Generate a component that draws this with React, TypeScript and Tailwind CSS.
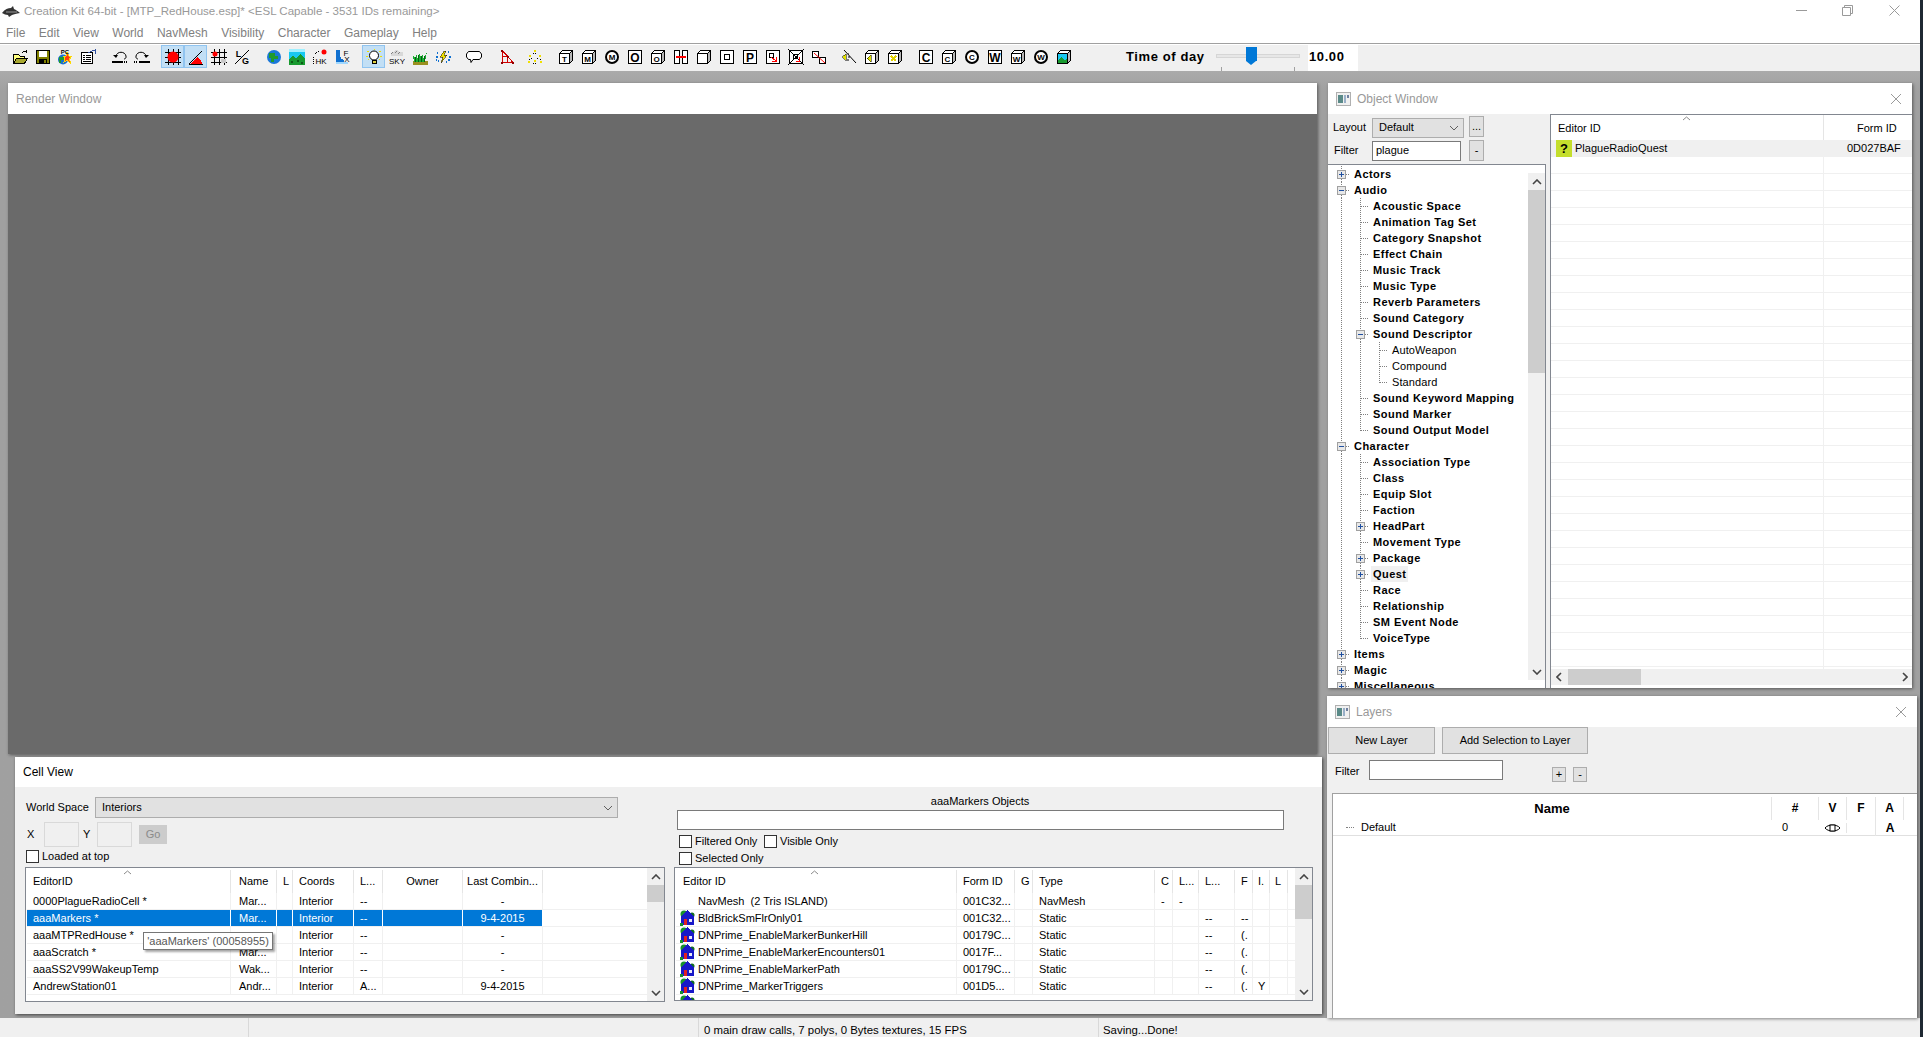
import { type ReactNode } from 'react';

const Svg = ({ children }: { children: ReactNode }) => (
  <svg width="16" height="16" viewBox="0 0 16 16" shapeRendering="crispEdges" fill="none">
    {children}
  </svg>
);

const Tx = ({ x, y, s = 8, c = '#000', w = 700, children }: { x: number; y: number; s?: number; c?: string; w?: number; children: string }) => (
  <text x={x} y={y} fontSize={s} fill={c} fontWeight={w} textAnchor="middle" shapeRendering="auto">
    {children}
  </text>
);

// cube with a letter on the front face
const Cube = ({ letter, fill = '#fff', children }: { letter?: string; fill?: string; children?: ReactNode }) => (
  <Svg>
    <path d="M1.5 4.5 L4.5 1.5 H14.5 V11.5 L11.5 14.5 Z" fill="#b8b8b8" stroke="#000" />
    <path d="M1.5 4.5 L4.5 1.5 H14.5 L11.5 4.5 Z" fill="#fff" stroke="#000" />
    <rect x="1.5" y="4.5" width="10" height="10" fill={fill} stroke="#000" />
    {letter && <Tx x={6.5} y={12.5} s={8}>{letter}</Tx>}
    {children}
  </Svg>
);

const Boxed = ({ letter, children }: { letter?: string; children?: ReactNode }) => (
  <Svg>
    <rect x="1.5" y="1.5" width="13" height="13" fill="#fff" stroke="#000" />
    {letter && <Tx x={8} y={12.5} s={12}>{letter}</Tx>}
    {children}
  </Svg>
);

const Ring = ({ letter }: { letter: string }) => (
  <Svg>
    <circle cx="8" cy="8" r="6" fill="#fff" stroke="#000" strokeWidth="2" shapeRendering="auto" />
    <Tx x={8} y={11} s={8}>{letter}</Tx>
  </Svg>
);

const Grid = () => (
  <path d="M3.5 0V16M8.5 0V16M13.5 0V16M0 3.5H16M0 8.5H16M0 13.5H16" stroke="#000" />
);

const toolbarIcons: Record<string, ReactNode> = {
  open: (
    <Svg>
      <path d="M1.5 5.5H6.5L8 7H12.5V14.5H1.5Z" fill="#ffff80" stroke="#000" />
      <path d="M1.5 14.5L4.5 9.5H15.5L12.5 14.5Z" fill="#a8a830" stroke="#000" />
      <path d="M9.5 4.5L11.5 2.5H14M14 1V4" stroke="#000" />
    </Svg>
  ),
  save: (
    <Svg>
      <rect x="1.5" y="1.5" width="13" height="13" fill="#808000" stroke="#000" />
      <rect x="4" y="2" width="8" height="6" fill="#fff" />
      <rect x="4" y="10" width="8" height="5" fill="#000" />
      <rect x="9" y="11" width="2" height="3" fill="#808000" />
    </Svg>
  ),
  pc: (
    <Svg>
      <circle cx="6" cy="10.5" r="5" fill="#1a6fd0" shapeRendering="auto" />
      <path d="M2 8H7V11H4V14H2Z" fill="#1f9a30" />
      <path d="M10 3L12 7H15L12.5 10L13.5 14L10 11.5L7 13L8 9L6 7H9Z" fill="#ff3a10" stroke="#ffd800" />
      <Tx x={8} y={5} s={6}>PC</Tx>
    </Svg>
  ),
  form: (
    <Svg>
      <rect x="1.5" y="3.5" width="11" height="11" fill="#fff" stroke="#000" />
      <path d="M3 6.5H5M6 6.5H11M3 8.5H5M6 8.5H11M3 10.5H5M6 10.5H11M3 12.5H11" stroke="#000" />
      <path d="M8 4L13 1.5L15 1V5" stroke="#3050a0" />
    </Svg>
  ),
  undo: (
    <svg width="18" height="16" viewBox="0 0 18 16" fill="none">
      <path d="M5 7C6 2 14 2 15 7C15.5 9 14 10 13 10" stroke="#000" />
      <path d="M2 6H7L5 9Z" fill="#000" />
      <path d="M1 13H12" stroke="#000" strokeWidth="2" />
      <path d="M13 13H17" stroke="#000" strokeDasharray="1 1" strokeWidth="2" />
    </svg>
  ),
  redo: (
    <svg width="18" height="16" viewBox="0 0 18 16" fill="none">
      <path d="M13 7C12 2 4 2 3 7C2.5 9 4 10 5 10" stroke="#000" />
      <path d="M16 6H11L13 9Z" fill="#000" />
      <path d="M6 13H17" stroke="#000" strokeWidth="2" />
      <path d="M1 13H5" stroke="#000" strokeDasharray="1 1" strokeWidth="2" />
    </svg>
  ),
  redGrid: (
    <Svg>
      <Grid />
      <circle cx="8" cy="8" r="5.5" fill="#f00" shapeRendering="auto" />
    </Svg>
  ),
  angle: (
    <Svg>
      <path d="M1 15L14 2" stroke="#000" shapeRendering="auto" />
      <path d="M2 15L9 8C12 10 14 12 14 15Z" fill="#f00" />
      <path d="M1 15.5H15" stroke="#000" />
    </Svg>
  ),
  gridDot: (
    <Svg>
      <Grid />
      <circle cx="4" cy="5" r="2.5" fill="#f00" shapeRendering="auto" />
      <rect x="10" y="10" width="5" height="4" fill="#c8c8c8" />
    </Svg>
  ),
  lg: (
    <Svg>
      <path d="M1 15L15 1" stroke="#000" shapeRendering="auto" />
      <Tx x={4.5} y={7.5} s={9}>L</Tx>
      <Tx x={11.5} y={15} s={9}>G</Tx>
    </Svg>
  ),
  globe: (
    <Svg>
      <circle cx="8" cy="8" r="7" fill="#1a78d8" shapeRendering="auto" />
      <path d="M3 4H9V7H12V10H8V13H5V9H3Z" fill="#1f9a30" />
    </Svg>
  ),
  land: (
    <Svg>
      <rect x="0" y="0" width="16" height="16" fill="#18c8f0" />
      <rect x="0" y="0" width="16" height="3" fill="#a0f0ff" />
      <path d="M0 16V10L4 7L7 10L11 5L16 10V16Z" fill="#189a30" />
      <path d="M2 12H4V14H2ZM8 11H10V13H8ZM12 13H14V15H12Z" fill="#0c5c18" />
    </Svg>
  ),
  hk: (
    <Svg>
      <path d="M1.5 15V7M3 5L5 3L8 2" stroke="#000" strokeDasharray="1 1" />
      <circle cx="12" cy="3" r="2.5" fill="#f00" shapeRendering="auto" />
      <Tx x={9} y={15} s={8} w={400}>HK</Tx>
    </Svg>
  ),
  fx: (
    <Svg>
      <path d="M1 1H5V7C5 9 7 10 9 11V15H1Z" fill="#1070d0" />
      <path d="M1 13H13V15H1Z" fill="#a0d8ff" />
      <Tx x={11} y={7} s={8} w={400}>F</Tx>
      <Tx x={12} y={13} s={8} w={400}>X</Tx>
    </Svg>
  ),
  bulb: (
    <Svg>
      <circle cx="8" cy="6.5" r="4.5" fill="#fff" stroke="#000" shapeRendering="auto" />
      <path d="M6 11H10V14H6Z" fill="#e0d040" stroke="#000" />
      <path d="M1 2L3 3M15 2L13 3M0 7H2M14 7H16M2 11L3 10M14 11L13 10M8 0V1" stroke="#f0e000" />
    </Svg>
  ),
  sky: (
    <Svg>
      <path d="M2 7C0 4 4 3 5 3C6 0 10 1 11 3C14 2 15 5 14 7Z" fill="#d8d8d8" />
      <path d="M4 3L2 5M8 2L5 5M11 3L8 6" stroke="#808080" strokeDasharray="1 1" />
      <Tx x={8} y={15} s={8} w={400}>SKY</Tx>
    </Svg>
  ),
  grass: (
    <Svg>
      <rect x="1" y="12" width="15" height="4" fill="#9a9020" />
      <path d="M2 13L1 6L4 10L4 4L6 10L8 3L9 10L11 5L11 10L15 3L13 13Z" fill="#18b030" />
      <path d="M3 13V8M6 13V6M9 13V7M12 13V7" stroke="#0c5c18" />
    </Svg>
  ),
  rain: (
    <Svg>
      <path d="M9 2L5 8H8L6 14L12 6H9L11 2Z" fill="#f0e000" stroke="#000" strokeWidth="0.5" />
      <path d="M2 4H3M1 8H3M3 12H4M13 3H14M14 8H16M13 11H15M11 13H12M1 11H2" stroke="#1070d0" strokeWidth="2" />
    </Svg>
  ),
  speech: (
    <svg width="18" height="16" viewBox="0 0 18 16" fill="none">
      <path d="M3.5 2.5H14.5L16.5 5V8L14.5 10.5H8L6 13.5L5.5 10.5H3.5L1.5 8V5Z" fill="#fff" stroke="#000" />
    </svg>
  ),
  redTri: (
    <Svg>
      <path d="M3.5 2V13.5H14L8.5 7L3.5 2M3.5 7.5H8.5M8.5 7V13.5" stroke="#d00000" />
      <path d="M2 1H4V3H2ZM2 13H4V15H2ZM13 13H15V15H13ZM8 7H10V9H8Z" fill="#900000" />
    </Svg>
  ),
  stars: (
    <Svg>
      <path d="M7 1H9V3H7ZM2 6H4V8H2ZM12 6H14V8H12ZM1 12H3V14H1ZM13 12H15V14H13ZM7 11H9V13H7Z" fill="#f0e000" />
      <path d="M6 4H10M4 9H6M10 9H12M2 10H3M13 10H14M6 14H10" stroke="#000" strokeDasharray="1 1" />
    </Svg>
  ),
  cubeT: <Cube letter="T" />,
  cubeM: <Cube letter="M" />,
  ringM: <Ring letter="M" />,
  boxO: <Boxed letter="O" />,
  cubeO: <Cube letter="O" />,
  door: (
    <Svg>
      <rect x="1.5" y="1.5" width="5" height="13" stroke="#000" fill="#fff" />
      <rect x="9.5" y="1.5" width="5" height="13" stroke="#000" fill="#fff" />
      <path d="M3 7H13V9H3Z" fill="#f00" />
    </Svg>
  ),
  cube: <Cube />,
  boxIn: (
    <Boxed>
      <rect x="5.5" y="5.5" width="5" height="5" stroke="#000" />
    </Boxed>
  ),
  boxP: <Boxed letter="P" />,
  boxRed: (
    <Boxed>
      <rect x="4.5" y="4.5" width="4" height="4" stroke="#000" />
      <path d="M6 8L11 12M11 8V12H7" stroke="#f00" />
    </Boxed>
  ),
  boxX: (
    <Boxed>
      <path d="M0 0L16 16M16 0L0 16" stroke="#000" shapeRendering="auto" />
      <rect x="5.5" y="5.5" width="4" height="4" stroke="#000" />
      <path d="M11 8V12H8" stroke="#f00" />
    </Boxed>
  ),
  link: (
    <Svg>
      <rect x="1.5" y="2.5" width="6" height="6" fill="#fff" stroke="#000" />
      <rect x="8.5" y="8.5" width="6" height="6" fill="#fff" stroke="#000" />
      <path d="M3 4L14 14" stroke="#f00" shapeRendering="auto" />
    </Svg>
  ),
  cone: (
    <Svg>
      <path d="M1 8L5 5V12Z" fill="#e0e000" stroke="#000" strokeWidth="0.5" />
      <path d="M3 1L15 14M7 8H9M6 11H8M7 5H8" stroke="#000" shapeRendering="auto" />
    </Svg>
  ),
  cubeSpeak: (
    <Cube>
      <path d="M3 9.5L7 6V13Z" fill="#e0e000" stroke="#000" strokeWidth="0.5" />
    </Cube>
  ),
  cubeX: (
    <Cube>
      <path d="M4 7L9 12M9 7L4 12" stroke="#e0d000" strokeWidth="1.5" />
    </Cube>
  ),
  boxC: <Boxed letter="C" />,
  cubeC: <Cube letter="C" />,
  ringC: <Ring letter="C" />,
  boxW: <Boxed letter="W" />,
  cubeW: <Cube letter="W" />,
  ringW: <Ring letter="W" />,
  cubeLand: (
    <Cube>
      <rect x="2" y="5" width="9" height="9" fill="#18c8f0" />
      <path d="M2 14V11L5 8L8 11L11 10V14Z" fill="#189a30" />
    </Cube>
  ),
};

const ToolGroup = ({ icons, pitch, className = '' }: { icons: string[]; pitch: string; className?: string }) => (
  <div className={`mb-[3px] flex items-center ${className}`}>
    {icons.map((name) => {
      const active = name === 'redGrid' || name === 'angle' || name === 'bulb';
      return (
        <div
          key={name}
          className={`flex h-[23px] items-center justify-center border ${pitch} ${
            active ? 'border-[#90c4f0] bg-[#c2dff5]' : 'border-transparent'
          }`}
        >
          {toolbarIcons[name]}
        </div>
      );
    })}
  </div>
);

const Toolbar = () => (
  <div className="flex h-[26px] items-center bg-[#f0f0f0] pl-[9px]">
    <ToolGroup icons={['open', 'save', 'pc', 'form']} pitch="w-[22.5px]" />
    <ToolGroup icons={['undo', 'redo']} pitch="w-[22px]" className="ml-[10px]" />
    <ToolGroup icons={['redGrid', 'angle', 'gridDot', 'lg']} pitch="w-[23px]" className="ml-[8px]" />
    <ToolGroup icons={['globe', 'land', 'hk', 'fx']} pitch="w-[23px]" className="ml-[9px]" />
    <ToolGroup icons={['bulb', 'sky', 'grass', 'rain']} pitch="w-[23px]" className="ml-[8px]" />
    <ToolGroup icons={['speech']} pitch="w-[23px]" className="ml-[8px]" />
    <ToolGroup icons={['redTri']} pitch="w-[23px]" className="ml-[10px]" />
    <ToolGroup icons={['stars']} pitch="w-[23px]" className="ml-[5px]" />
    <ToolGroup
      icons={['cubeT', 'cubeM', 'ringM', 'boxO', 'cubeO', 'door', 'cube', 'boxIn', 'boxP', 'boxRed', 'boxX', 'link']}
      pitch="w-[23px]"
      className="ml-[8px]"
    />
    <ToolGroup icons={['cone', 'cubeSpeak', 'cubeX']} pitch="w-[23px]" className="ml-[7px]" />
    <ToolGroup
      icons={['boxC', 'cubeC', 'ringC', 'boxW', 'cubeW', 'ringW', 'cubeLand']}
      pitch="w-[23px]"
      className="ml-[8px]"
    />
    <span className="mb-[3px] ml-[51px] w-[90px] text-[13px] font-bold tracking-[0.6px] text-black">Time of day</span>
    <div className="relative h-[26px] w-[84px]">
      <div className="absolute top-[9px] left-0 h-[4px] w-[84px] border border-[#d6d6d6] bg-[#e7e7e7]" />
      <div className="absolute top-[2px] left-[30px] h-[14px] w-[11px] bg-[#0078d7]" />
      <div className="absolute top-[16px] left-[30px] h-0 w-0 border-x-[5.5px] border-t-[4px] border-x-transparent border-t-[#0078d7]" />
      <div className="absolute top-[22px] left-[5px] h-[4px] w-px bg-[#a0a0a0]" />
      <div className="absolute top-[22px] left-[78px] h-[4px] w-px bg-[#a0a0a0]" />
    </div>
    <div className="ml-[8px] flex h-[26px] w-[50px] items-center bg-white pb-[2px] pl-[1px] text-[13px] font-bold tracking-[0.6px] text-black">
      10.00
    </div>
  </div>
);

const WindowIcon = () => (
  <svg width="15" height="14" viewBox="0 0 15 14" shapeRendering="crispEdges" className="mr-[6px]">
    <rect x="0.5" y="0.5" width="14" height="13" fill="#f0f0f0" stroke="#b0b0b0" />
    <rect x="2" y="3" width="5" height="8" fill="#5a8a88" />
    <rect x="8" y="3" width="2" height="8" fill="#9ab0c8" />
    <rect x="11" y="3" width="2" height="3" fill="#7080a0" />
  </svg>
);

const CloseX = () => (
  <svg width="12" height="12" viewBox="0 0 12 12">
    <path d="M1 1L11 11M11 1L1 11" stroke="#9a9a9a" />
  </svg>
);

const Chevron = ({ up = false, dark = false }: { up?: boolean; dark?: boolean }) => (
  <svg width="10" height="6" viewBox="0 0 10 6">
    <path
      d={up ? 'M1 5L5 1L9 5' : 'M1 1L5 5L9 1'}
      fill="none"
      stroke={dark ? '#444' : '#606060'}
      strokeWidth={dark ? 1.6 : 1}
    />
  </svg>
);

const SortMark = ({ className }: { className: string }) => (
  <div className={`absolute top-[1px] ${className}`}>
    <svg width="9" height="5" viewBox="0 0 9 5">
      <path d="M1 4L4.5 1L8 4" fill="none" stroke="#8a8a8a" />
    </svg>
  </div>
);

const ArrowSide = ({ right = false }: { right?: boolean }) => (
  <svg width="6" height="10" viewBox="0 0 6 10">
    <path d={right ? 'M1 1L5 5L1 9' : 'M5 1L1 5L5 9'} fill="none" stroke="#444" strokeWidth="1.6" />
  </svg>
);

const VScroll = ({ thumb, spacer }: { thumb: string; spacer: string }) => (
  <div className="flex h-full w-[17px] shrink-0 flex-col bg-[#f0f0f0]">
    <div className="flex h-[17px] items-center justify-center">
      <Chevron up dark />
    </div>
    <div className={`bg-[#cdcdcd] ${thumb}`} />
    <div className={spacer} />
    <div className="flex h-[17px] items-center justify-center">
      <Chevron dark />
    </div>
  </div>
);

const Check = ({ label, className = '' }: { label: string; className?: string }) => (
  <div className={`flex items-center ${className}`}>
    <span className="h-[13px] w-[13px] border border-[#333] bg-white" />
    <span className="ml-[3px]">{label}</span>
  </div>
);

// --- Tree in the Object Window

type TreeRow = { g: string; label: string; bold?: boolean; hover?: boolean };

const treeRows: TreeRow[] = [
  { g: '+', label: 'Actors', bold: true },
  { g: '-', label: 'Audio', bold: true },
  { g: '|T', label: 'Acoustic Space', bold: true },
  { g: '|T', label: 'Animation Tag Set', bold: true },
  { g: '|T', label: 'Category Snapshot', bold: true },
  { g: '|T', label: 'Effect Chain', bold: true },
  { g: '|T', label: 'Music Track', bold: true },
  { g: '|T', label: 'Music Type', bold: true },
  { g: '|T', label: 'Reverb Parameters', bold: true },
  { g: '|T', label: 'Sound Category', bold: true },
  { g: '|-', label: 'Sound Descriptor', bold: true },
  { g: '||T', label: 'AutoWeapon' },
  { g: '||T', label: 'Compound' },
  { g: '||L', label: 'Standard' },
  { g: '|T', label: 'Sound Keyword Mapping', bold: true },
  { g: '|T', label: 'Sound Marker', bold: true },
  { g: '|L', label: 'Sound Output Model', bold: true },
  { g: '-', label: 'Character', bold: true },
  { g: '|T', label: 'Association Type', bold: true },
  { g: '|T', label: 'Class', bold: true },
  { g: '|T', label: 'Equip Slot', bold: true },
  { g: '|T', label: 'Faction', bold: true },
  { g: '|+', label: 'HeadPart', bold: true },
  { g: '|T', label: 'Movement Type', bold: true },
  { g: '|+', label: 'Package', bold: true },
  { g: '|+', label: 'Quest', bold: true, hover: true },
  { g: '|T', label: 'Race', bold: true },
  { g: '|T', label: 'Relationship', bold: true },
  { g: '|T', label: 'SM Event Node', bold: true },
  { g: '|L', label: 'VoiceType', bold: true },
  { g: '+', label: 'Items', bold: true },
  { g: '+', label: 'Magic', bold: true },
  { g: '+', label: 'Miscellaneous', bold: true },
];

const Guide = ({ kind }: { kind: string }) => {
  const dots = { stroke: '#808080', strokeDasharray: '1 1' };
  return (
    <svg width="19" height="16" viewBox="0 0 19 16" shapeRendering="crispEdges" className="shrink-0">
      {kind === '|' && <path d="M9.5 0V16" {...dots} />}
      {kind === 'T' && <path d="M9.5 0V16M10 8.5H18" {...dots} />}
      {kind === 'L' && <path d="M9.5 0V8.5M10 8.5H18" {...dots} />}
      {(kind === '+' || kind === '-') && (
        <>
          <path d="M9.5 0V4M9.5 13V16M14 8.5H18" {...dots} />
          <rect x="5.5" y="4.5" width="8" height="8" fill="#e8e8e8" stroke="#a0a0a0" />
          <path d="M7 8.5H12" stroke="#2050a0" />
          {kind === '+' && <path d="M9.5 6V11" stroke="#2050a0" />}
        </>
      )}
    </svg>
  );
};

const Tree = () => (
  <div className="flex min-w-0 flex-1 flex-col overflow-hidden pt-[1px] pl-[4px]">
    {treeRows.map((row) => (
      <div key={row.label} className="flex h-4 shrink-0 items-center text-black">
        {row.g.split('').map((kind, i) => (
          <Guide key={i} kind={kind} />
        ))}
        <span
          className={`ml-[1px] px-[2px] leading-[16px] ${row.hover ? 'bg-[#f0f0f0]' : ''} ${
            row.bold ? 'font-bold tracking-[0.45px]' : 'tracking-[0.1px]'
          }`}
        >
          {row.label}
        </span>
      </div>
    ))}
  </div>
);

const ObjectWindow = () => (
  <div className="flex h-[605px] w-[584px] flex-col bg-[#f0f0f0] shadow-[1px_1px_3px_rgba(0,0,0,0.45)]">
    <div className="flex h-[31px] shrink-0 items-center bg-white pr-[10px] pl-[8px]">
      <WindowIcon />
      <span className="flex-1 text-[12px] text-[#999]">Object Window</span>
      <CloseX />
    </div>
    <div className="flex min-h-0 flex-1">
      <div className="flex w-[222px] shrink-0 flex-col">
        <div className="flex h-[25px] items-center pt-[2px] pl-[5px]">
          <span className="w-[39px]">Layout</span>
          <div className="flex h-[20px] w-[92px] items-center justify-between border border-[#adadad] bg-[#e1e1e1] pr-[4px] pl-[6px]">
            Default
            <Chevron />
          </div>
          <div className="mb-[2px] ml-[5px] flex h-[21px] w-[15px] items-center justify-center border border-[#adadad] bg-[#e1e1e1]">
            ...
          </div>
        </div>
        <div className="flex h-[25px] items-center pb-[2px] pl-[6px]">
          <span className="w-[38px]">Filter</span>
          <div className="flex h-[20px] w-[89px] items-center border border-[#7a7a7a] bg-white pl-[3px]">plague</div>
          <div className="ml-[8px] flex h-[21px] w-[15px] items-center justify-center border border-[#adadad] bg-[#e1e1e1]">
            -
          </div>
        </div>
        <div className="mr-[4px] flex min-h-0 flex-1 border-t border-r border-[#828790] bg-white">
          <Tree />
          <div className="my-[8px]">
            <VScroll thumb="h-[183px]" spacer="flex-1" />
          </div>
        </div>
      </div>
      <div className="flex min-w-0 flex-1 flex-col border-t border-l border-[#828790] bg-white">
        <div className="relative flex h-[25px] shrink-0">
          <SortMark className="left-[131px]" />
          <span className="flex w-[273px] items-center border-r border-[#e5e5e5] pt-[1px] pl-[7px]">Editor ID</span>
          <span className="flex flex-1 items-center pt-[1px] pl-[33px]">Form ID</span>
        </div>
        <div className="flex min-h-0 flex-1 flex-col overflow-hidden">
          <div className="flex h-[17px] shrink-0 items-center bg-[#f0f0f0]">
            <span className="ml-[5px] flex h-[17px] w-[16px] items-center justify-center bg-[#c4de2c] text-[13px] font-bold text-black">
              ?
            </span>
            <span className="ml-[3px] w-[249px]">PlagueRadioQuest</span>
            <span className="flex-1 pl-[23px]">0D027BAF</span>
          </div>
          {Array.from({ length: 31 }, (_, i) => (
            <div key={i} className="flex h-[17px] shrink-0 border-b border-[#f0f0f0]">
              <div className="w-[273px] border-r border-[#f0f0f0]" />
            </div>
          ))}
        </div>
        <div className="flex h-[16px] shrink-0 items-center bg-[#f0f0f0] pr-[4px] pl-[5px]">
          <ArrowSide />
          <div className="ml-[6px] h-[16px] w-[73px] bg-[#cdcdcd]" />
          <div className="flex-1" />
          <ArrowSide right />
        </div>
        <div className="h-[3px] shrink-0 bg-white" />
      </div>
    </div>
  </div>
);

const LayersWindow = () => (
  <div className="mt-[8px] ml-[-1px] flex h-[325px] w-[590px] flex-col bg-[#f0f0f0] shadow-[1px_1px_3px_rgba(0,0,0,0.45)]">
    <div className="flex h-[31px] shrink-0 items-center bg-white pr-[10px] pl-[8px]">
      <WindowIcon />
      <span className="flex-1 text-[12px] text-[#999]">Layers</span>
      <CloseX />
    </div>
    <div className="ml-[1px] flex gap-[7px]">
      <button className="h-[27px] w-[107px] border border-[#adadad] bg-[#e1e1e1]">New Layer</button>
      <button className="h-[27px] w-[146px] border border-[#adadad] bg-[#e1e1e1]">Add Selection to Layer</button>
    </div>
    <div className="mt-[6px] flex h-[22px] items-start">
      <span className="ml-[8px] w-[34px] pt-[3px]">Filter</span>
      <div className="h-[20px] w-[134px] border border-[#7a7a7a] bg-white" />
      <div className="mt-[7px] ml-[49px] flex h-[15px] w-[14px] items-center justify-center border border-[#adadad] bg-[#e1e1e1]">
        +
      </div>
      <div className="mt-[7px] ml-[7px] flex h-[15px] w-[14px] items-center justify-center border border-[#adadad] bg-[#e1e1e1]">
        -
      </div>
    </div>
    <div className="mt-[11px] ml-[5px] flex min-h-0 flex-1 flex-col border-t border-l border-[#a0a0a0] bg-white pt-[3px]">
      <div className="flex h-[23px] shrink-0 items-center text-[12px] font-bold text-black">
        <span className="w-[439px] border-r border-[#e5e5e5] text-center text-[13px] leading-[23px]">Name</span>
        <span className="w-[47px] border-r border-[#e5e5e5] text-center leading-[23px]">#</span>
        <span className="w-[28px] border-r border-[#e5e5e5] text-center leading-[23px]">V</span>
        <span className="w-[29px] border-r border-[#e5e5e5] text-center leading-[23px]">F</span>
        <span className="w-[28px] border-r border-[#e5e5e5] text-center leading-[23px]">A</span>
      </div>
      <div className="flex h-[16px] shrink-0 items-center border-b border-[#e0e0e0]">
        <span className="ml-[13px] w-[8px] border-t border-dotted border-[#808080]" />
        <span className="ml-[7px] w-[411px]">Default</span>
        <span className="w-[47px] pl-[10px]">0</span>
        <span className="flex w-[28px] justify-center border-r border-[#e5e5e5]">
          <svg width="17" height="10" viewBox="0 0 17 10" fill="none">
            <path d="M1 5C4 1 13 1 16 5C13 9 4 9 1 5Z" stroke="#000" />
            <rect x="6" y="2" width="5" height="6" fill="#fff" stroke="#000" />
          </svg>
        </span>
        <span className="w-[29px] border-r border-[#e5e5e5]">&nbsp;</span>
        <span className="w-[28px] text-center text-[12px] font-bold">A</span>
      </div>
    </div>
  </div>
);

// --- Cell View lists

const leftCols = ['w-[204px] pl-[6px]', 'w-[46px] pl-[8px]', 'w-[16px] pl-[6px]', 'w-[61px] pl-[6px]', 'w-[29px] pl-[6px]', 'w-[80px] text-center', 'w-[80px] text-center'];

const leftRows = [
  ['0000PlagueRadioCell *', 'Mar...', '', 'Interior', '--', '', '-'],
  ['aaaMarkers *', 'Mar...', '', 'Interior', '--', '', '9-4-2015'],
  ['aaaMTPRedHouse *', '', '', 'Interior', '--', '', '-'],
  ['aaaScratch *', 'Mar...', '', 'Interior', '--', '', '-'],
  ['aaaSS2V99WakeupTemp', 'Wak...', '', 'Interior', '--', '', '-'],
  ['AndrewStation01', 'Andr...', '', 'Interior', 'A...', '', '9-4-2015'],
];

const rightCols = ['w-[281px]', 'w-[58px] pl-[6px]', 'w-[18px]', 'w-[122px] pl-[6px]', 'w-[18px] pl-[6px]', 'w-[26px] pl-[6px]', 'w-[36px] pl-[6px]', 'w-[18px] pl-[6px]', 'w-[17px] pl-[5px]', 'w-[18px] pl-[5px]'];

const rightRows = [
  ['NavMesh  (2 Tris ISLAND)', '001C32...', '', 'NavMesh', '-', '-', '', '', '', ''],
  ['BldBrickSmFlrOnly01', '001C32...', '', 'Static', '', '', '--', '--', '', ''],
  ['DNPrime_EnableMarkerBunkerHill', '00179C...', '', 'Static', '', '', '--', '(.', '', ''],
  ['DNPrime_EnableMarkerEncounters01', '0017F...', '', 'Static', '', '', '--', '(.', '', ''],
  ['DNPrime_EnableMarkerPath', '00179C...', '', 'Static', '', '', '--', '(.', '', ''],
  ['DNPrime_MarkerTriggers', '001D5...', '', 'Static', '', '', '--', '(.', 'Y', ''],
];

const House = () => (
  <svg width="15" height="16" viewBox="0 0 15 16" shapeRendering="crispEdges" className="shrink-0">
    <circle cx="4" cy="4" r="3.5" fill="#18902c" shapeRendering="auto" />
    <circle cx="12" cy="5" r="2.5" fill="#106c20" shapeRendering="auto" />
    <path d="M7.5 0L14 7V15H1V7Z" fill="#1818c8" />
    <rect x="4" y="9" width="3" height="6" fill="#e02020" />
    <rect x="9" y="9" width="3" height="3" fill="#e8e8f8" />
    <rect x="0" y="13" width="3" height="3" fill="#18902c" />
  </svg>
);

const Head = ({ className, children }: { className: string; children?: string }) => (
  <span className={`h-[23px] shrink-0 truncate border-r border-[#e5e5e5] leading-[23px] ${className}`}>{children}</span>
);

const LeftList = () => (
  <div className="relative flex h-[135px] w-[640px] border border-[#828790] bg-white">
    <div className="flex min-w-0 flex-1 flex-col overflow-hidden pt-[1px] pl-[1px]">
      <div className="relative flex shrink-0 pt-[1px]">
        <SortMark className="left-[96px]" />
        <Head className={leftCols[0]}>EditorID</Head>
        <Head className={leftCols[1]}>Name</Head>
        <Head className={leftCols[2]}>L</Head>
        <Head className={leftCols[3]}>Coords</Head>
        <Head className={leftCols[4]}>L...</Head>
        <Head className={leftCols[5]}>Owner</Head>
        <Head className={leftCols[6]}>Last Combin...</Head>
      </div>
      {leftRows.map((row, r) => (
        <div key={row[0]} className="flex h-[17px] shrink-0 border-b border-[#f0f0f0]">
          {row.map((cell, c) => (
            <span
              key={c}
              className={`h-[16px] shrink-0 truncate border-r leading-[16px] ${leftCols[c]} ${
                r === 1 ? 'border-white bg-[#0078d7] text-white' : 'border-[#f0f0f0]'
              }`}
            >
              {cell}
            </span>
          ))}
        </div>
      ))}
    </div>
    <VScroll thumb="h-[17px]" spacer="flex-1" />
    <div className="absolute top-[64px] left-[117px] z-10 flex h-[18px] w-[130px] items-center justify-center border border-[#767676] bg-white text-[#575757] shadow-[2px_2px_2px_rgba(0,0,0,0.35)]">
      'aaaMarkers' (00058955)
    </div>
  </div>
);

const RightList = () => (
  <div className="flex h-[134px] w-[639px] border border-[#828790] bg-white">
    <div className="flex min-w-0 flex-1 flex-col overflow-hidden pt-[1px] pl-[1px]">
      <div className="relative flex shrink-0 pt-[1px]">
        <SortMark className="left-[134px]" />
        <Head className="w-[281px] pl-[7px]">Editor ID</Head>
        <Head className={rightCols[1]}>Form ID</Head>
        <Head className="w-[18px] pl-[6px]">G</Head>
        <Head className={rightCols[3]}>Type</Head>
        <Head className={rightCols[4]}>C</Head>
        <Head className={rightCols[5]}>L...</Head>
        <Head className={rightCols[6]}>L...</Head>
        <Head className={rightCols[7]}>F</Head>
        <Head className={rightCols[8]}>I.</Head>
        <Head className={rightCols[9]}>L</Head>
      </div>
      {rightRows.map((row, r) => (
        <div key={row[0]} className="flex h-[17px] shrink-0 border-b border-[#f0f0f0]">
          {row.map((cell, c) => (
            <span
              key={c}
              className={`flex h-[16px] shrink-0 items-center overflow-hidden border-r border-[#f0f0f0] whitespace-pre ${rightCols[c]}`}
            >
              {c === 0 && (r > 0 ? <span className="mr-[3px] ml-[4px] flex"><House /></span> : <span className="w-[22px]" />)}
              {cell}
            </span>
          ))}
        </div>
      ))}
      <div className="ml-[4px] shrink-0">
        <House />
      </div>
    </div>
    <VScroll thumb="h-[34px]" spacer="flex-1" />
  </div>
);

const CellView = () => (
  <div className="mt-[3px] ml-[7px] flex h-[257px] w-[1307px] flex-col bg-[#f0f0f0] shadow-[1px_1px_3px_rgba(0,0,0,0.6)]">
    <div className="flex h-[30px] shrink-0 items-center bg-white pl-[8px] text-[12px] text-black">Cell View</div>
    <div className="flex min-h-0 flex-1 pl-[10px]">
      <div className="flex w-[650px] shrink-0 flex-col">
        <div className="mt-[10px] flex h-[21px] items-center">
          <span className="ml-[1px] w-[69px]">World Space</span>
          <div className="flex h-[21px] w-[523px] items-center justify-between border border-[#adadad] bg-[#e1e1e1] pr-[4px] pl-[6px]">
            Interiors
            <Chevron />
          </div>
        </div>
        <div className="mt-[4px] flex h-[25px] items-center">
          <span className="ml-[2px] w-[17px]">X</span>
          <span className="h-[25px] w-[35px] border border-[#d9d9d9] bg-[#f0f0f0]" />
          <span className="ml-[4px] w-[14px]">Y</span>
          <span className="h-[25px] w-[35px] border border-[#d9d9d9] bg-[#f0f0f0]" />
          <span className="ml-[7px] flex h-[19px] w-[28px] items-center justify-center bg-[#cccccc] text-[#8a8a8a]">Go</span>
        </div>
        <Check label="Loaded at top" className="ml-[1px] h-[19px]" />
        <div className="mt-[1px]">
          <LeftList />
        </div>
      </div>
      <div className="flex min-w-0 flex-1 flex-col">
        <div className="mt-[7px] h-[15px] w-[607px] pl-[3px] text-center leading-[15px]">aaaMarkers Objects</div>
        <div className="mt-[1px] ml-[2px] h-[20px] w-[607px] border border-[#7a7a7a] bg-white" />
        <div className="mt-[3px] ml-[4px] flex h-[17px] items-center">
          <Check label="Filtered Only" className="w-[85px]" />
          <Check label="Visible Only" />
        </div>
        <Check label="Selected Only" className="ml-[4px] h-[16px]" />
        <div className="mt-[1px] ml-[-1px]">
          <RightList />
        </div>
      </div>
    </div>
  </div>
);

export default function App() {
  return (
    <div className="relative flex h-[1037px] w-[1923px] overflow-hidden bg-[#1f2933] font-['Liberation_Sans',sans-serif] text-[11px] text-black">
      <div className="flex w-[1920px] shrink-0 flex-col bg-white">
        <div className="flex h-[24px] shrink-0 items-center pl-[2px]">
          <svg width="18" height="12" viewBox="0 0 18 12" className="mr-[4px]">
            <path d="M0 7C3 3 6 2 9 2L11 0L12 3C14 4 16 5 18 7C14 8 12 8 10 9L7 11L6 9C4 9 2 8 0 7Z" fill="#333" />
            <path d="M4 6H15" stroke="#999" />
          </svg>
          <span className="flex-1 text-[11.55px] text-[#999]">
            Creation Kit 64-bit - [MTP_RedHouse.esp]* &lt;ESL Capable - 3531 IDs remaining&gt;
          </span>
          <svg width="11" height="1" className="mr-[35px] mb-[3px]">
            <rect width="11" height="1" fill="#9a9a9a" />
          </svg>
          <svg width="11" height="11" viewBox="0 0 11 11" fill="none" className="mr-[36px] mb-[3px]">
            <path d="M2.5 2.5V0.5H10.5V8.5H8.5M0.5 2.5H8.5V10.5H0.5Z" stroke="#9a9a9a" />
          </svg>
          <svg width="11" height="11" viewBox="0 0 11 11" className="mr-[20px] mb-[3px]">
            <path d="M0.5 0.5L10.5 10.5M10.5 0.5L0.5 10.5" stroke="#9a9a9a" />
          </svg>
        </div>
        <div className="flex h-[19px] shrink-0 items-center gap-[13.5px] pb-[2px] pl-[6px] text-[12px] text-[#808080]">
          {['File', 'Edit', 'View', 'World', 'NavMesh', 'Visibility', 'Character', 'Gameplay', 'Help'].map((m) => (
            <span key={m}>{m}</span>
          ))}
        </div>
        <div className="h-px shrink-0 bg-[#a0a0a0]" />
        <div className="h-px shrink-0 bg-white" />
        <Toolbar />
        <div className="relative z-10 flex h-[947px] shrink-0 bg-gradient-to-b from-[#aaaaaa] to-[#a0a0a0] to-[20px] pt-[12px]">
          <div className="ml-[8px] flex w-[1315px] shrink-0 flex-col">
            <div className="flex h-[671px] w-[1309px] flex-col shadow-[1px_1px_3px_rgba(0,0,0,0.45)]">
              <div className="flex h-[31px] shrink-0 items-center bg-white pl-[8px] text-[12px] text-[#999]">Render Window</div>
              <div className="flex-1 bg-[#6a6a6a]" />
            </div>
            <CellView />
          </div>
          <div className="ml-[5px] flex flex-col">
            <ObjectWindow />
            <LayersWindow />
          </div>
        </div>
        <div className="flex h-[19px] shrink-0 items-center bg-[#f0f0f0] text-[11.4px]">
          <span className="h-full w-[249px] border-r border-[#d9d9d9]" />
          <span className="h-full w-[450px] border-r border-[#d9d9d9]" />
          <span className="h-full w-[400px] border-r border-[#d9d9d9] pl-[5px] leading-[24px]">
            0 main draw calls, 7 polys, 0 Bytes textures, 15 FPS
          </span>
          <span className="h-full pl-[4px] leading-[24px]">Saving...Done!</span>
        </div>
      </div>
    </div>
  );
}
